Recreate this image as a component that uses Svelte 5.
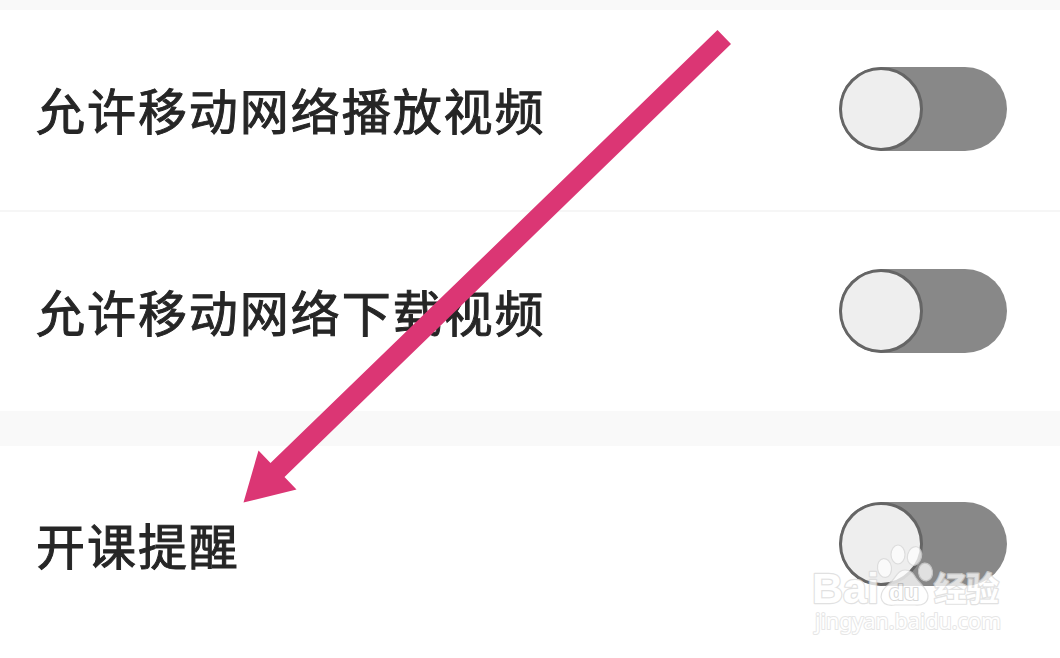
<script lang="ts">
  type Setting = { id: string; label: string; on: boolean };

  let groups = $state<Setting[][]>([
    [
      { id: "play", label: "允许移动网络播放视频", on: false },
      { id: "download", label: "允许移动网络下载视频", on: false },
    ],
    [{ id: "remind", label: "开课提醒", on: false }],
  ]);
</script>

<main class="screen">
  {#each groups as group, i (i)}
    <section class="group">
      {#each group as item (item.id)}
        <div class="row">
          <span class="label">{item.label}</span>
          <button
            class="switch"
            class:on={item.on}
            role="switch"
            aria-checked={item.on}
            aria-label={item.label}
            onclick={() => (item.on = !item.on)}
          >
            <span class="knob"></span>
          </button>
        </div>
      {/each}
    </section>
  {/each}

  <svg class="overlay" viewBox="0 0 1060 658" aria-hidden="true">
    <path class="arrow" d="M717.5 30 L731 44 L284.5 477 L296.5 489.5 L243.5 502.5 L258.5 450.5 L270.5 463 Z" />

    <g class="watermark">
      <ellipse cx="884.5" cy="568" rx="7" ry="9.5" transform="rotate(-8 884.5 568)" />
      <ellipse cx="898" cy="554.5" rx="7" ry="9.5" />
      <ellipse cx="914.5" cy="556" rx="7" ry="9.5" transform="rotate(14 914.5 556)" />
      <ellipse cx="925.5" cy="572" rx="7" ry="9" transform="rotate(-8 925.5 572)" />
      <path d="M905 570 C899 570 897 575 892 581 C886 587 881 590 881 597 C882 604 888 606 895 605 L915 605 C922 606 928 603 928 596 C928 589 920 584 916 578 C913 573 911 570 905 570 Z" />
      <text class="brand" x="812" y="603" textLength="67" lengthAdjust="spacingAndGlyphs">Bai</text>
      <text class="du" x="889" y="600" textLength="30" lengthAdjust="spacingAndGlyphs">du</text>
      <text class="cn" x="934" y="601" textLength="65">经验</text>
      <text class="url" x="815" y="629" textLength="186" lengthAdjust="spacingAndGlyphs">jingyan.baidu.com</text>
    </g>
  </svg>
</main>

<style>
  :global(body) { background: #fff; overflow: hidden; }
  .screen {
    position: relative;
    box-sizing: border-box;
    width: 1060px;
    height: 658px;
    padding-top: 10px;
    display: flex;
    flex-direction: column;
    gap: 35px;
    background: #f9f9f9;
    font-family: "Noto Sans CJK SC", sans-serif;
  }
  .group { background: #fff; }
  .group:last-of-type { flex: 1; }
  .row {
    box-sizing: border-box;
    display: flex;
    align-items: center;
    justify-content: space-between;
    height: 200px;
    padding: 0 53px 2px 36px;
  }
  .group:last-of-type .row { padding-bottom: 4px; }
  .row + .row { height: 201px; border-top: 2px solid #f6f6f6; padding-bottom: 2px; }
  .label {
    color: #262626;
    font-size: 49px;
    letter-spacing: 1.95px;
    line-height: 74px;
    white-space: nowrap;
    -webkit-text-stroke: 1px #262626;
  }
  .switch {
    box-sizing: border-box;
    width: 168px;
    height: 84px;
    padding: 0;
    border: 0;
    border-radius: 42px;
    background: #888;
    display: flex;
    overflow: hidden;
  }
  .switch.on { justify-content: flex-end; background: #4a9; }
  .knob {
    box-sizing: border-box;
    width: 84px;
    height: 84px;
    border: 3px solid #656565;
    border-radius: 50%;
    background: #eee;
  }

  .overlay { position: absolute; inset: 0; width: 1060px; height: 658px; pointer-events: none; }
  .arrow { fill: #db3674; }
  .watermark {
    opacity: 0.75;
    fill: #fff;
    stroke: #d8d8d8;
    stroke-width: 1.2;
    stroke-linejoin: round;
  }
  .watermark text { paint-order: stroke; stroke-width: 2.4; }
  .brand { font-family: "Liberation Sans", sans-serif; font-size: 43px; font-weight: 700; }
  .watermark .du { font-family: "Liberation Sans", sans-serif; font-size: 22px; font-weight: 700; stroke: #ccc; stroke-width: 2; }
  .cn { font-family: "Noto Sans CJK SC", sans-serif; font-size: 33px; font-weight: 700; }
  .watermark .url { font-family: "Noto Sans", sans-serif; font-size: 22px; stroke: #dedede; stroke-width: 2; }
</style>
